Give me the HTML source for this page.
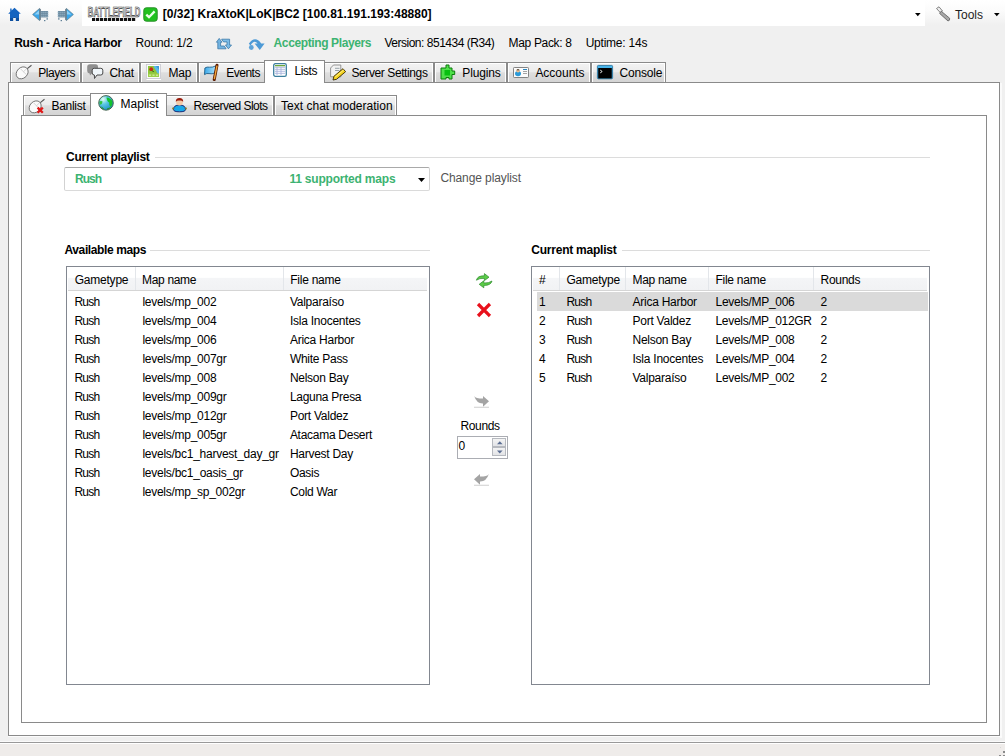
<!DOCTYPE html>
<html><head><meta charset="utf-8"><style>

html,body{margin:0;padding:0;width:1005px;height:756px;overflow:hidden;background:#f0f0f0;}
#root{position:relative;width:1005px;height:756px;overflow:hidden;font-family:"Liberation Sans",sans-serif;font-size:12px;}
.t{position:absolute;white-space:nowrap;line-height:12px;font-size:12px;}
.a{position:absolute;box-sizing:border-box;}
svg{position:absolute;overflow:visible;}
.tab{position:absolute;box-sizing:border-box;border:1px solid #8a8a8a;border-bottom:none;
 background:linear-gradient(#f3f3f3 0%,#ececec 45%,#dedede 52%,#d4d4d4 100%);box-shadow:inset 1px 1px 0 #fff, inset -1px 0 0 #fff;}
.tabsel{position:absolute;box-sizing:border-box;border:1px solid #8a8a8a;border-bottom:none;background:#fff;}
.lv{position:absolute;box-sizing:border-box;border:1px solid #828790;background:#fff;}
.hdr{position:absolute;background:linear-gradient(#ffffff 0%,#ffffff 45%,#f4f5f7 50%,#f1f2f4 100%);border-bottom:1px solid #d5d5d5;}
.sep{position:absolute;width:1px;background:#e3e6ea;}
.gl{position:absolute;height:1px;background:#dcdcdc;}

</style></head><body>
<div id="root">
<div class="a" style="left:0;top:0;width:1005px;height:27px;background:linear-gradient(#ffffff 0px,#fbfbfb 11px,#f0f0f0 25px)"></div>
<div class="a" style="left:82px;top:0;width:843px;height:26px;background:#fff"></div>
<div class="a" style="left:0;top:741px;width:1005px;height:1px;background:#fafafa"></div>
<div class="a" style="left:0;top:742px;width:1005px;height:1px;background:#999999"></div>
<div class="a" style="left:0;top:743px;width:1005px;height:1px;background:#ffffff"></div>
<div class="a" style="left:0;top:744px;width:1005px;height:12px;background:#efecea"></div>
<svg style="left:997px;top:747px" width="8" height="9"><g fill="#8a8a8a"><rect x="6" y="4" width="2" height="2"/><rect x="2" y="8" width="2" height="1"/><rect x="6" y="8" width="2" height="1"/></g><g fill="#d8d8d8"><rect x="3" y="0" width="1" height="1"/></g></svg>
<div class="a" style="left:8px;top:82px;width:992px;height:654px;border:1px solid #8a8a8a;background:#fff"></div>
<div class="a" style="left:1000px;top:83px;width:2px;height:655px;background:#fafafa"></div>
<div class="a" style="left:8px;top:736px;width:994px;height:1px;background:#fcfcfc"></div>
<div class="tab" style="left:10px;top:62px;width:71px;height:20px"></div>
<div class="tab" style="left:81px;top:62px;width:59px;height:20px"></div>
<div class="tab" style="left:140px;top:62px;width:58px;height:20px"></div>
<div class="tab" style="left:198px;top:62px;width:68px;height:20px"></div>
<div class="tab" style="left:323px;top:62px;width:111px;height:20px"></div>
<div class="tab" style="left:434px;top:62px;width:73px;height:20px"></div>
<div class="tab" style="left:507px;top:62px;width:84px;height:20px"></div>
<div class="tab" style="left:591px;top:62px;width:75px;height:20px"></div>
<div class="tabsel" style="left:264px;top:60px;width:61px;height:23px"></div>
<div class="a" style="left:21px;top:115px;width:966px;height:608px;border:1px solid #8a8a8a;background:#fff"></div>
<div class="tab" style="left:23px;top:95px;width:69px;height:20px"></div>
<div class="tab" style="left:165px;top:95px;width:109px;height:20px"></div>
<div class="tab" style="left:274px;top:95px;width:123px;height:20px"></div>
<div class="tabsel" style="left:90px;top:93px;width:77px;height:23px"></div>
<div class="gl" style="left:155px;top:157px;width:775px"></div>
<div class="gl" style="left:150px;top:250px;width:280px"></div>
<div class="gl" style="left:622px;top:250px;width:308px"></div>
<div class="a" style="left:64px;top:167px;width:366px;height:24px;border:1px solid #abadb3;border-color:#a9a9a9 #d2d2d2 #dadada #d2d2d2;background:#fff;border-radius:2px"></div>
<svg style="left:418px;top:178px" width="7" height="5"><path d="M0 0H7L3.5 4Z" fill="#000"/></svg>
<div class="lv" style="left:66px;top:266px;width:364px;height:419px"></div>
<div class="hdr" style="left:68px;top:267px;width:359px;height:23px"></div>
<div class="sep" style="left:135px;top:267px;height:23px"></div>
<div class="sep" style="left:283px;top:267px;height:23px"></div>
<div class="lv" style="left:531px;top:266px;width:399px;height:419px"></div>
<div class="hdr" style="left:533px;top:267px;width:394px;height:23px"></div>
<div class="sep" style="left:559px;top:267px;height:23px"></div>
<div class="sep" style="left:625px;top:267px;height:23px"></div>
<div class="sep" style="left:708px;top:267px;height:23px"></div>
<div class="sep" style="left:813px;top:267px;height:23px"></div>
<div class="a" style="left:537px;top:292px;width:391px;height:19px;background:#dadada"></div>
<div class="a" style="left:457px;top:436px;width:51px;height:23px;border:1px solid #abadb3;background:#fff"></div>
<div class="a" style="left:492px;top:438px;width:14px;height:9px;border:1px solid #b6b9bf;background:linear-gradient(#f4f4f4,#e2e3e6)"></div>
<div class="a" style="left:492px;top:447px;width:14px;height:9px;border:1px solid #b6b9bf;background:linear-gradient(#f4f4f4,#e2e3e6)"></div>
<svg style="left:497px;top:441px" width="6" height="4"><path d="M0 3.2H5.6L2.8 0.2Z" fill="#5a6d92"/></svg>
<svg style="left:497px;top:450px" width="6" height="4"><path d="M0 0.4H5.6L2.8 3.4Z" fill="#5a6d92"/></svg>
<svg style="left:8px;top:7px" width="13" height="15" viewBox="0 0 13 15"><path d="M6.5 0.8 L12.8 6.8 L11 6.8 L11 14 L7.9 14 L7.9 10 L5.1 10 L5.1 14 L2 14 L2 6.8 L0.2 6.8 L2.2 4.8 L2.2 1.5 L3.6 1.5 L3.6 3.5 Z" fill="#1464c0"/><path d="M2 11H11V14H7.9V10H5.1V14H2Z" fill="#0d4f9e"/></svg>
<svg style="left:32px;top:8px" width="17" height="13" viewBox="0 0 17 13"><path d="M0.6 6.5 L7.6 0.4 L7.6 12.6 Z" fill="#39a6ea" stroke="#5a7a8a" stroke-width="0.7"/><path d="M2.5 6.5 L7 2.5 V6.5Z" fill="#8fd0f5"/><path d="M7.6 0.4 L8.8 1.3 V11.7 L7.6 12.6Z" fill="#5a7080"/><rect x="8.6" y="3" width="7.4" height="6.4" fill="#5f7f96"/><g fill="#a9c2d3"><rect x="9.3" y="3.6" width="1.2" height="1.2"/><rect x="11.3" y="3.6" width="1.2" height="1.2"/><rect x="13.3" y="3.6" width="1.2" height="1.2"/><rect x="15.3" y="3.6" width="1.2" height="1.2"/><rect x="9.3" y="5.6" width="1.2" height="1.2"/><rect x="11.3" y="5.6" width="1.2" height="1.2"/><rect x="13.3" y="5.6" width="1.2" height="1.2"/><rect x="15.3" y="5.6" width="1.2" height="1.2"/><rect x="9.3" y="7.6" width="1.2" height="1.2"/><rect x="11.3" y="7.6" width="1.2" height="1.2"/><rect x="13.3" y="7.6" width="1.2" height="1.2"/><rect x="15.3" y="7.6" width="1.2" height="1.2"/></g><rect x="14.5" y="10.2" width="1.4" height="1.4" fill="#5f7f96"/><rect x="12" y="12" width="1.4" height="1.2" fill="#5f7f96"/></svg>
<svg style="left:57px;top:8px" width="17" height="13" viewBox="0 0 17 13"><g transform="translate(17 0) scale(-1 1)"><path d="M0.6 6.5 L7.6 0.4 L7.6 12.6 Z" fill="#39a6ea" stroke="#5a7a8a" stroke-width="0.7"/><path d="M2.5 6.5 L7 2.5 V6.5Z" fill="#8fd0f5"/><path d="M7.6 0.4 L8.8 1.3 V11.7 L7.6 12.6Z" fill="#5a7080"/><rect x="8.6" y="3" width="7.4" height="6.4" fill="#5f7f96"/><g fill="#a9c2d3"><rect x="9.3" y="3.6" width="1.2" height="1.2"/><rect x="11.3" y="3.6" width="1.2" height="1.2"/><rect x="13.3" y="3.6" width="1.2" height="1.2"/><rect x="15.3" y="3.6" width="1.2" height="1.2"/><rect x="9.3" y="5.6" width="1.2" height="1.2"/><rect x="11.3" y="5.6" width="1.2" height="1.2"/><rect x="13.3" y="5.6" width="1.2" height="1.2"/><rect x="15.3" y="5.6" width="1.2" height="1.2"/><rect x="9.3" y="7.6" width="1.2" height="1.2"/><rect x="11.3" y="7.6" width="1.2" height="1.2"/><rect x="13.3" y="7.6" width="1.2" height="1.2"/><rect x="15.3" y="7.6" width="1.2" height="1.2"/></g><rect x="14.5" y="10.2" width="1.4" height="1.4" fill="#5f7f96"/><rect x="12" y="12" width="1.4" height="1.2" fill="#5f7f96"/></g></svg>
<svg style="left:87px;top:5px" width="55" height="17" viewBox="0 0 55 17"><defs><linearGradient id="bfg" x1="0" y1="0" x2="0" y2="1"><stop offset="0" stop-color="#ffffff"/><stop offset="1" stop-color="#b8b8b8"/></linearGradient></defs><text x="0.8" y="12.2" font-family="Liberation Sans" font-weight="700" font-size="15" textLength="52.5" lengthAdjust="spacingAndGlyphs" fill="url(#bfg)" stroke="#333" stroke-width="0.7">BATTLEFIELD</text><rect x="5" y="13" width="44" height="3" fill="#111"/><g fill="#fff"><rect x="8.2" y="13" width="0.8" height="3"/><rect x="12.2" y="13" width="0.8" height="3"/><rect x="16.2" y="13" width="0.8" height="3"/><rect x="20.2" y="13" width="0.8" height="3"/><rect x="24.2" y="13" width="0.8" height="3"/><rect x="28.2" y="13" width="0.8" height="3"/><rect x="32.2" y="13" width="0.8" height="3"/><rect x="36.2" y="13" width="0.8" height="3"/><rect x="40.2" y="13" width="0.8" height="3"/><rect x="44.2" y="13" width="0.8" height="3"/><rect x="48.2" y="13" width="0.8" height="3"/></g></svg>
<svg style="left:143px;top:7px" width="15" height="15" viewBox="0 0 15 15"><rect x="0.8" y="0.8" width="13.4" height="13.4" rx="2.5" fill="#1fc11f" stroke="#2a8f2a" stroke-width="1"/><path d="M3.3 7.6 L6 10.2 L11.6 4.4" fill="none" stroke="#e9ffe9" stroke-width="2.3"/></svg>
<svg style="left:915px;top:13px" width="6" height="4" viewBox="0 0 6 4"><path d="M0 0H5.6L2.8 3.2Z" fill="#000"/></svg>
<svg style="left:935px;top:6px" width="16" height="16" viewBox="0 0 16 16"><path d="M1.5 2.5 L4 0.8 L7.5 5 L5.5 6.8 Z" fill="#eee" stroke="#777" stroke-width="0.9"/><path d="M6.2 5.2 L14.6 12.2 Q15.2 14.6 13 15 L4.6 7.4 Z" fill="#a8a8a8" stroke="#666" stroke-width="0.9"/></svg>
<svg style="left:994px;top:13px" width="6" height="4" viewBox="0 0 6 4"><path d="M0 0H5.6L2.8 3.2Z" fill="#000"/></svg>
<svg style="left:216px;top:38px" width="16" height="12" viewBox="0 0 16 12"><path d="M0.4 4.2 L3.2 0.4 L6 4.2 L4.6 4.2 L4.6 8 L8.3 8 L10.1 10.8 L1.8 10.8 L1.8 4.2 Z" fill="#72b4e2" stroke="#3b78a8" stroke-width="0.8" stroke-linejoin="round"/><path d="M5.6 1.2 L13.6 1.2 L13.6 7 L15.5 7 L12.4 10.8 L9.4 7 L11 7 L11 3.9 L7.5 3.9 Z" fill="#7cbde8" stroke="#3b78a8" stroke-width="0.8" stroke-linejoin="round"/></svg>
<svg style="left:248px;top:37px" width="17" height="14" viewBox="0 0 17 14"><circle cx="3.3" cy="10.5" r="2.4" fill="#5ea3d8"/><path d="M0.8 6.8 Q7 -2 13.2 6.5 L16.6 6.5 L11.8 13 L6.6 6.5 L9.6 6.5 Q6 2.4 2.6 8.6 Z" fill="#4d9ad6"/></svg>
<svg style="left:15px;top:64px" width="17" height="16" viewBox="0 0 17 16"><g transform="rotate(45 7.8 8.5)"><ellipse cx="7.6" cy="9.2" rx="5.3" ry="6.6" fill="#fbfbfb" stroke="#666" stroke-width="0.85"/><path d="M3.4 7.5 H12.2 M7.8 2.8 V7.5" stroke="#bbb" stroke-width="0.6"/></g><path d="M12.3 4.6 L16.5 1.2" stroke="#555" stroke-width="1.1"/></svg>
<svg style="left:86px;top:64px" width="18" height="16" viewBox="0 0 18 16"><path d="M1.2 3 Q1.2 0.2 4 0.2 H9.5 Q12 0.2 12 3 V7 Q12 9.8 9.5 9.8 H5.5 L4 11.5 L3.6 9.6 Q1.2 9.2 1.2 7 Z" fill="#8f8f8f"/><path d="M6.2 6.2 Q6.2 4.3 8.2 4.3 H14.8 Q16.8 4.3 16.8 6.2 V9 Q16.8 11 14.8 11 H11 L8.5 14.5 L8.4 11 Q6.2 11 6.2 9 Z" fill="#f0f6fa" stroke="#4a4a4a" stroke-width="1"/></svg>
<svg style="left:146px;top:64px" width="15" height="16" viewBox="0 0 15 16"><rect x="0.5" y="0.5" width="14" height="14" fill="#fafafa" stroke="#c8c8d0" stroke-width="0.8"/><rect x="2" y="2" width="11" height="11" fill="#8cc63a"/><path d="M7.5 2 H13 V11 Q11 9.5 10 6.5 Q8.5 4.5 7.5 2 Z" fill="#5ab8ea"/><path d="M10 2 H13 V6 Q11.5 4 10 2Z" fill="#3a9ad8"/><circle cx="5.2" cy="5.2" r="1.9" fill="#c82a12"/><path d="M6.3 6.6 L7.6 8" stroke="#1a4a1a" stroke-width="1"/><path d="M2 9.5 H13 V13 H2Z" fill="#9ccf4a"/><g fill="#c8e890"><rect x="3" y="10.5" width="2" height="1.5"/><rect x="6.5" y="10.5" width="2" height="1.5"/><rect x="10" y="10.5" width="2" height="1.5"/></g><path d="M0.5 15.5H15" stroke="#fff" stroke-width="1"/></svg>
<svg style="left:204px;top:64px" width="16" height="17" viewBox="0 0 16 17"><defs><linearGradient id="flg" x1="0" y1="0" x2="1" y2="0"><stop offset="0" stop-color="#3aa8ea"/><stop offset="1" stop-color="#b0e4fa"/></linearGradient></defs><path d="M0.9 4 Q3 2.6 5.5 3.2 Q8.5 3.6 12 1.8 L11.2 8.8 Q8 10.4 5 9.6 Q2.6 9 0.5 10.6 Z" fill="url(#flg)" stroke="#1f5f88" stroke-width="0.9"/><path d="M13 1.2 L10.2 15.6" stroke="#5a1a00" stroke-width="3" stroke-linecap="round"/><path d="M13 1.6 L10.3 15.2" stroke="#f2a63a" stroke-width="1.4"/></svg>
<svg style="left:273px;top:63px" width="14" height="14" viewBox="0 0 14 14"><rect x="0.7" y="0.7" width="12.6" height="12.6" rx="1.6" fill="#fff" stroke="#3d7f9e" stroke-width="1.3"/><rect x="2" y="2" width="10" height="1.3" fill="#6aa83a"/><g stroke="#aab4dc" stroke-width="0.9" fill="none"><path d="M2 4.3H12 M2 6.3H12 M2 8.3H12 M2 10.3H12 M4 4V12 M8 4V12"/></g></svg>
<svg style="left:330px;top:64px" width="16" height="17" viewBox="0 0 16 17"><path d="M3.5 1 H10.8 V12.8 H0.6 V4 Z" fill="#f2f2f2" stroke="#8a8a8a" stroke-width="0.9"/><path d="M5 4.3H9.5 M5 6.5H9.5" stroke="#8d9aa0" stroke-width="0.9"/><path d="M13 4.7 L15.6 7.7 L6.5 15.3 L3 16 L3.9 12.3 Z" fill="#f5d41e" stroke="#3a2a00" stroke-width="0.9" stroke-linejoin="round"/><path d="M13.6 6 L5.2 13" stroke="#fff3a0" stroke-width="0.8"/></svg>
<svg style="left:440px;top:64px" width="16" height="16" viewBox="0 0 16 16"><path d="M1 4 H6 V1 H9 V4 H12 V7 H14.7 V10.5 H12 V15 H9 V13.5 H6 V15 H1 Z" fill="#4ee04a" stroke="#0c7a0c" stroke-width="1"/><rect x="4.5" y="6" width="5.5" height="5.5" fill="#08c010"/></svg>
<svg style="left:513px;top:67px" width="16" height="11" viewBox="0 0 16 11"><rect x="0.5" y="0.5" width="15" height="10" rx="0.8" fill="#fbfbfb" stroke="#777" stroke-width="0.9"/><ellipse cx="5" cy="6.6" rx="3" ry="2.6" fill="#2a9ad8"/><circle cx="5" cy="3.8" r="1.7" fill="#f0c090"/><path d="M3.3 3.2 Q5 1.2 6.8 3.2Z" fill="#222"/><path d="M10 2.5H14" stroke="#2a86c0" stroke-width="1"/><path d="M10 4.5H14 M10 6.5H14" stroke="#9a9a9a" stroke-width="0.9"/></svg>
<svg style="left:597px;top:65px" width="16" height="14" viewBox="0 0 16 14"><rect x="0.4" y="0.4" width="15.2" height="13.4" rx="1" fill="#48b4ea" stroke="#1e6a96" stroke-width="0.8"/><rect x="1.2" y="3" width="13.6" height="10.4" fill="#000"/><path d="M3.3 5.2 Q5 5.8 4.8 6.5 Q5 7.2 3.3 7.8" stroke="#fff" stroke-width="1" fill="none"/></svg>
<svg style="left:28px;top:98px" width="17" height="16" viewBox="0 0 17 16"><g transform="rotate(45 7.8 8.5)"><ellipse cx="7.6" cy="9.2" rx="5.3" ry="6.6" fill="#fbfbfb" stroke="#666" stroke-width="0.85"/><path d="M3.4 7.5 H12.2 M7.8 2.8 V7.5" stroke="#bbb" stroke-width="0.6"/></g><path d="M12.3 4.6 L16.5 1.2" stroke="#555" stroke-width="1.1"/><path d="M9.6 9.6 L14.8 14.8 M14.8 9.6 L9.6 14.8" stroke="#e01818" stroke-width="2.3"/></svg>
<svg style="left:98px;top:95px" width="16" height="16" viewBox="0 0 16 16"><defs><radialGradient id="gg" cx="0.3" cy="0.25" r="0.85"><stop offset="0" stop-color="#e6fff0"/><stop offset="0.4" stop-color="#5cc8e6"/><stop offset="1" stop-color="#1588c4"/></radialGradient></defs><circle cx="8" cy="7.9" r="7.3" fill="url(#gg)"/><path d="M8.5 2.5 Q12.5 2.8 14.6 6.5 Q14.8 10 12.6 12 Q10.8 10 11.2 7.6 Q9.2 6.8 8.5 2.5Z" fill="#14c22c"/><path d="M1.2 6.8 Q2.8 5.2 4.6 6.4 Q4.4 9 2 9.8 Z" fill="#30c440"/><path d="M2.6 11.2 Q5 11.8 6.6 14.6 Q4 14 2.6 11.2Z" fill="#1aa02a"/><path d="M9 13.5 Q11.5 12.8 13 11.5 Q12 14 9 14.8Z" fill="#1aa02a"/><circle cx="8" cy="7.9" r="7.3" fill="none" stroke="#405a40" stroke-width="0.9"/></svg>
<svg style="left:172px;top:97px" width="15" height="16" viewBox="0 0 15 16"><path d="M1.5 12.5 Q1.5 8 7.5 8 Q13.5 8 13.5 12.5 Q13.5 14.8 7.5 14.8 Q1.5 14.8 1.5 12.5Z" fill="#18a8e8" stroke="#101a6a" stroke-width="0.9"/><circle cx="1" cy="11.5" r="0.9" fill="#8a7a20"/><circle cx="14" cy="11.5" r="0.9" fill="#8a7a20"/><ellipse cx="7.5" cy="5.2" rx="3.3" ry="3.2" fill="#f3c9a6"/><path d="M3.8 5 Q3.6 1 7.5 1 Q11.4 1 11.2 5 Q10 3.2 7.5 3.6 Q5 3.2 3.8 5Z" fill="#9a1a0a"/></svg>
<svg style="left:476px;top:273px" width="17" height="16" viewBox="0 0 17 16"><path d="M0.4 7.2 Q1.5 2.6 8.4 2.8 L8.4 0.6 L13 4.2 L8.4 7.6 L8.4 5.4 Q3.5 5 0.4 7.2 Z" fill="#5ccc48" stroke="#2a8a2a" stroke-width="0.7"/><path d="M16 8 Q14.8 12.6 7.8 12.4 L7.8 14.8 L3.2 11.3 L7.8 7.8 L7.8 10 Q12.8 10.4 16 8 Z" fill="#5ccc48" stroke="#2a8a2a" stroke-width="0.7"/></svg>
<svg style="left:477px;top:303px" width="14" height="14" viewBox="0 0 14 14"><path d="M2.2 2.2 L11.8 11.8 M11.8 2.2 L2.2 11.8" stroke="#e8101c" stroke-width="3.3" stroke-linecap="square"/></svg>
<svg style="left:474px;top:395px" width="16" height="13" viewBox="0 0 16 13"><path d="M0.2 1 Q1.5 3.6 9 3.6 V1 L15 6.2 L9 11.8 V8.4 Q2.5 8.6 0.2 1 Z" fill="#a4a4a4"/><path d="M0 12.3 H15" stroke="#d6d6d6" stroke-width="1.2"/></svg>
<svg style="left:473px;top:473px" width="16" height="13" viewBox="0 0 16 13"><g transform="translate(16 0) scale(-1 1)"><path d="M0.2 1 Q1.5 3.6 9 3.6 V1 L15 6.2 L9 11.8 V8.4 Q2.5 8.6 0.2 1 Z" fill="#a4a4a4"/><path d="M0 12.3 H15" stroke="#d6d6d6" stroke-width="1.2"/></g></svg>
<span id="t0" class="t" style="left:162.8px;top:8.34px;font-weight:700;color:#000;letter-spacing:-0.001px">[0/32] KraXtoK|LoK|BC2 [100.81.191.193:48880]</span>
<span id="t1" class="t" style="left:955.0px;top:8.84px;color:#1e1e1e;letter-spacing:-0.003px">Tools</span>
<span id="t2" class="t" style="left:14.2px;top:36.84px;font-weight:700;color:#000;letter-spacing:-0.291px">Rush - Arica Harbor</span>
<span id="t3" class="t" style="left:135.4px;top:36.84px;color:#000;letter-spacing:-0.172px">Round: 1/2</span>
<span id="t4" class="t" style="left:273.6px;top:36.84px;font-weight:700;color:#3cb371;letter-spacing:-0.385px">Accepting Players</span>
<span id="t5" class="t" style="left:384.4px;top:36.84px;color:#000;letter-spacing:-0.480px">Version: 851434 (R34)</span>
<span id="t6" class="t" style="left:508.6px;top:36.84px;color:#000;letter-spacing:-0.337px">Map Pack: 8</span>
<span id="t7" class="t" style="left:585.7px;top:36.84px;color:#000;letter-spacing:-0.230px">Uptime: 14s</span>
<span id="t8" class="t" style="left:38.2px;top:66.84px;color:#000;letter-spacing:-0.459px">Players</span>
<span id="t9" class="t" style="left:109.4px;top:66.84px;color:#000;letter-spacing:-0.190px">Chat</span>
<span id="t10" class="t" style="left:168.5px;top:66.84px;color:#000;letter-spacing:-0.148px">Map</span>
<span id="t11" class="t" style="left:226.2px;top:66.84px;color:#000;letter-spacing:-0.481px">Events</span>
<span id="t12" class="t" style="left:294.6px;top:64.54px;color:#000;letter-spacing:-0.458px">Lists</span>
<span id="t13" class="t" style="left:351.4px;top:66.84px;color:#000;letter-spacing:-0.396px">Server Settings</span>
<span id="t14" class="t" style="left:462.3px;top:66.84px;color:#000;letter-spacing:-0.137px">Plugins</span>
<span id="t15" class="t" style="left:535.4px;top:66.84px;color:#000;letter-spacing:-0.020px">Accounts</span>
<span id="t16" class="t" style="left:619.4px;top:66.84px;color:#000;letter-spacing:-0.176px">Console</span>
<span id="t17" class="t" style="left:51.4px;top:100.34px;color:#000;letter-spacing:-0.262px">Banlist</span>
<span id="t18" class="t" style="left:120.5px;top:98.34px;color:#000;letter-spacing:0.026px">Maplist</span>
<span id="t19" class="t" style="left:193.6px;top:100.34px;color:#000;letter-spacing:-0.534px">Reserved Slots</span>
<span id="t20" class="t" style="left:281.1px;top:100.34px;color:#000;letter-spacing:0.005px">Text chat moderation</span>
<span id="t21" class="t" style="left:66.1px;top:150.84px;font-weight:700;color:#000;letter-spacing:-0.289px">Current playlist</span>
<span id="t22" class="t" style="left:75.0px;top:172.84px;font-weight:700;color:#3cb371;letter-spacing:-1.000px">Rush</span>
<span id="t23" class="t" style="left:289.4px;top:172.84px;font-weight:700;color:#3cb371;letter-spacing:-0.199px">11 supported maps</span>
<span id="t24" class="t" style="left:440.4px;top:171.84px;color:#545454;letter-spacing:-0.098px">Change playlist</span>
<span id="t25" class="t" style="left:64.5px;top:243.84px;font-weight:700;color:#000;letter-spacing:-0.388px">Available maps</span>
<span id="t26" class="t" style="left:531.3px;top:243.84px;font-weight:700;color:#000;letter-spacing:-0.232px">Current maplist</span>
<span id="t27" class="t" style="left:74.7px;top:273.84px;color:#000;letter-spacing:-0.220px">Gametype</span>
<span id="t28" class="t" style="left:142.0px;top:273.84px;color:#000;letter-spacing:-0.319px">Map name</span>
<span id="t29" class="t" style="left:290.3px;top:273.84px;color:#000;letter-spacing:-0.263px">File name</span>
<span id="t30" class="t" style="left:74.4px;top:295.54px;color:#000;letter-spacing:-0.754px">Rush</span>
<span id="t31" class="t" style="left:142.4px;top:295.54px;color:#000;letter-spacing:-0.268px">levels/mp_002</span>
<span id="t32" class="t" style="left:289.9px;top:295.54px;color:#000;letter-spacing:-0.254px">Valpara&iacute;so</span>
<span id="t33" class="t" style="left:74.4px;top:314.54px;color:#000;letter-spacing:-0.754px">Rush</span>
<span id="t34" class="t" style="left:142.4px;top:314.54px;color:#000;letter-spacing:-0.268px">levels/mp_004</span>
<span id="t35" class="t" style="left:289.9px;top:314.54px;color:#000;letter-spacing:-0.238px">Isla Inocentes</span>
<span id="t36" class="t" style="left:74.4px;top:333.54px;color:#000;letter-spacing:-0.754px">Rush</span>
<span id="t37" class="t" style="left:142.4px;top:333.54px;color:#000;letter-spacing:-0.268px">levels/mp_006</span>
<span id="t38" class="t" style="left:289.9px;top:333.54px;color:#000;letter-spacing:-0.253px">Arica Harbor</span>
<span id="t39" class="t" style="left:74.4px;top:352.54px;color:#000;letter-spacing:-0.754px">Rush</span>
<span id="t40" class="t" style="left:142.4px;top:352.54px;color:#000;letter-spacing:-0.264px">levels/mp_007gr</span>
<span id="t41" class="t" style="left:289.9px;top:352.54px;color:#000;letter-spacing:-0.273px">White Pass</span>
<span id="t42" class="t" style="left:74.4px;top:371.54px;color:#000;letter-spacing:-0.754px">Rush</span>
<span id="t43" class="t" style="left:142.4px;top:371.54px;color:#000;letter-spacing:-0.268px">levels/mp_008</span>
<span id="t44" class="t" style="left:289.9px;top:371.54px;color:#000;letter-spacing:-0.276px">Nelson Bay</span>
<span id="t45" class="t" style="left:74.4px;top:390.54px;color:#000;letter-spacing:-0.754px">Rush</span>
<span id="t46" class="t" style="left:142.4px;top:390.54px;color:#000;letter-spacing:-0.264px">levels/mp_009gr</span>
<span id="t47" class="t" style="left:289.9px;top:390.54px;color:#000;letter-spacing:-0.280px">Laguna Presa</span>
<span id="t48" class="t" style="left:74.4px;top:409.54px;color:#000;letter-spacing:-0.754px">Rush</span>
<span id="t49" class="t" style="left:142.4px;top:409.54px;color:#000;letter-spacing:-0.264px">levels/mp_012gr</span>
<span id="t50" class="t" style="left:289.9px;top:409.54px;color:#000;letter-spacing:-0.250px">Port Valdez</span>
<span id="t51" class="t" style="left:74.4px;top:428.54px;color:#000;letter-spacing:-0.754px">Rush</span>
<span id="t52" class="t" style="left:142.4px;top:428.54px;color:#000;letter-spacing:-0.264px">levels/mp_005gr</span>
<span id="t53" class="t" style="left:289.9px;top:428.54px;color:#000;letter-spacing:-0.277px">Atacama Desert</span>
<span id="t54" class="t" style="left:74.4px;top:447.54px;color:#000;letter-spacing:-0.754px">Rush</span>
<span id="t55" class="t" style="left:142.4px;top:447.54px;color:#000;letter-spacing:-0.257px">levels/bc1_harvest_day_gr</span>
<span id="t56" class="t" style="left:289.9px;top:447.54px;color:#000;letter-spacing:-0.270px">Harvest Day</span>
<span id="t57" class="t" style="left:74.4px;top:466.54px;color:#000;letter-spacing:-0.754px">Rush</span>
<span id="t58" class="t" style="left:142.4px;top:466.54px;color:#000;letter-spacing:-0.250px">levels/bc1_oasis_gr</span>
<span id="t59" class="t" style="left:289.9px;top:466.54px;color:#000;letter-spacing:-0.276px">Oasis</span>
<span id="t60" class="t" style="left:74.4px;top:485.54px;color:#000;letter-spacing:-0.754px">Rush</span>
<span id="t61" class="t" style="left:142.4px;top:485.54px;color:#000;letter-spacing:-0.269px">levels/mp_sp_002gr</span>
<span id="t62" class="t" style="left:289.9px;top:485.54px;color:#000;letter-spacing:-0.279px">Cold War</span>
<span id="t63" class="t" style="left:539.0px;top:273.84px;color:#000;letter-spacing:-0.301px">#</span>
<span id="t64" class="t" style="left:566.4px;top:273.84px;color:#000;letter-spacing:-0.220px">Gametype</span>
<span id="t65" class="t" style="left:632.5px;top:273.84px;color:#000;letter-spacing:-0.319px">Map name</span>
<span id="t66" class="t" style="left:715.5px;top:273.84px;color:#000;letter-spacing:-0.263px">File name</span>
<span id="t67" class="t" style="left:820.6px;top:273.84px;color:#000;letter-spacing:-0.310px">Rounds</span>
<span id="t68" class="t" style="left:539.0px;top:295.54px;color:#000;letter-spacing:-0.301px">1</span>
<span id="t69" class="t" style="left:566.4px;top:295.54px;color:#000;letter-spacing:-0.754px">Rush</span>
<span id="t70" class="t" style="left:632.5px;top:295.54px;color:#000;letter-spacing:-0.253px">Arica Harbor</span>
<span id="t71" class="t" style="left:715.5px;top:295.54px;color:#000;letter-spacing:-0.286px">Levels/MP_006</span>
<span id="t72" class="t" style="left:820.6px;top:295.54px;color:#000;letter-spacing:-0.301px">2</span>
<span id="t73" class="t" style="left:539.0px;top:314.54px;color:#000;letter-spacing:-0.301px">2</span>
<span id="t74" class="t" style="left:566.4px;top:314.54px;color:#000;letter-spacing:-0.754px">Rush</span>
<span id="t75" class="t" style="left:632.5px;top:314.54px;color:#000;letter-spacing:-0.250px">Port Valdez</span>
<span id="t76" class="t" style="left:715.5px;top:314.54px;color:#000;letter-spacing:-0.302px">Levels/MP_012GR</span>
<span id="t77" class="t" style="left:820.6px;top:314.54px;color:#000;letter-spacing:-0.301px">2</span>
<span id="t78" class="t" style="left:539.0px;top:333.54px;color:#000;letter-spacing:-0.301px">3</span>
<span id="t79" class="t" style="left:566.4px;top:333.54px;color:#000;letter-spacing:-0.754px">Rush</span>
<span id="t80" class="t" style="left:632.5px;top:333.54px;color:#000;letter-spacing:-0.276px">Nelson Bay</span>
<span id="t81" class="t" style="left:715.5px;top:333.54px;color:#000;letter-spacing:-0.286px">Levels/MP_008</span>
<span id="t82" class="t" style="left:820.6px;top:333.54px;color:#000;letter-spacing:-0.301px">2</span>
<span id="t83" class="t" style="left:539.0px;top:352.54px;color:#000;letter-spacing:-0.301px">4</span>
<span id="t84" class="t" style="left:566.4px;top:352.54px;color:#000;letter-spacing:-0.754px">Rush</span>
<span id="t85" class="t" style="left:632.5px;top:352.54px;color:#000;letter-spacing:-0.238px">Isla Inocentes</span>
<span id="t86" class="t" style="left:715.5px;top:352.54px;color:#000;letter-spacing:-0.286px">Levels/MP_004</span>
<span id="t87" class="t" style="left:820.6px;top:352.54px;color:#000;letter-spacing:-0.301px">2</span>
<span id="t88" class="t" style="left:539.0px;top:371.54px;color:#000;letter-spacing:-0.301px">5</span>
<span id="t89" class="t" style="left:566.4px;top:371.54px;color:#000;letter-spacing:-0.754px">Rush</span>
<span id="t90" class="t" style="left:632.5px;top:371.54px;color:#000;letter-spacing:-0.254px">Valpara&iacute;so</span>
<span id="t91" class="t" style="left:715.5px;top:371.54px;color:#000;letter-spacing:-0.286px">Levels/MP_002</span>
<span id="t92" class="t" style="left:820.6px;top:371.54px;color:#000;letter-spacing:-0.301px">2</span>
<span id="t93" class="t" style="left:460.5px;top:420.04px;color:#000;letter-spacing:-0.362px">Rounds</span>
<span id="t94" class="t" style="left:458.4px;top:439.84px;color:#000;letter-spacing:-0.301px">0</span>
</div>
</body></html>
